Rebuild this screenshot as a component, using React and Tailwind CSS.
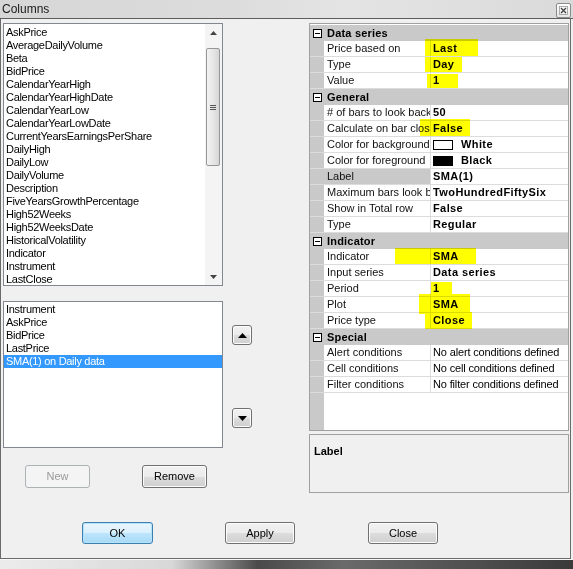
import React from "react";

const F = { fontFamily: '"Liberation Sans", Arial, sans-serif' };

const leftItems = [
  "AskPrice",
  "AverageDailyVolume",
  "Beta",
  "BidPrice",
  "CalendarYearHigh",
  "CalendarYearHighDate",
  "CalendarYearLow",
  "CalendarYearLowDate",
  "CurrentYearsEarningsPerShare",
  "DailyHigh",
  "DailyLow",
  "DailyVolume",
  "Description",
  "FiveYearsGrowthPercentage",
  "High52Weeks",
  "High52WeeksDate",
  "HistoricalVolatility",
  "Indicator",
  "Instrument",
  "LastClose",
];

const selItems = ["Instrument", "AskPrice", "BidPrice", "LastPrice", "SMA(1) on Daily data"];

const grid = [
  { h: "Data series" },
  { n: "Price based on", v: "Last", b: true },
  { n: "Type", v: "Day", b: true },
  { n: "Value", v: "1", b: true },
  { h: "General" },
  { n: "# of bars to look back", v: "50", b: true },
  { n: "Calculate on bar close", v: "False", b: true },
  { n: "Color for background", v: "White", b: true, sw: "#ffffff" },
  { n: "Color for foreground", v: "Black", b: true, sw: "#000000" },
  { n: "Label", v: "SMA(1)", b: true, sel: true },
  { n: "Maximum bars look back", v: "TwoHundredFiftySix", b: true },
  { n: "Show in Total row", v: "False", b: true },
  { n: "Type", v: "Regular", b: true },
  { h: "Indicator" },
  { n: "Indicator", v: "SMA", b: true },
  { n: "Input series", v: "Data series", b: true },
  { n: "Period", v: "1", b: true },
  { n: "Plot", v: "SMA", b: true },
  { n: "Price type", v: "Close", b: true },
  { h: "Special" },
  { n: "Alert conditions", v: "No alert conditions defined" },
  { n: "Cell conditions", v: "No cell conditions defined" },
  { n: "Filter conditions", v: "No filter conditions defined" },
];

function WinButton({ children, className = "", disabled, def }) {
  return (
    <div
      className={
        "flex items-center justify-center rounded-[3px] border text-[11px] " +
        (disabled
          ? "border-[#adb2b5] bg-[#f4f4f4] text-[#9a9a9a] "
          : def
          ? "border-[#3c7fb1] bg-[linear-gradient(#eaf6fd_0%,#d9f0fc_50%,#bee6fd_50%,#a7d9f5_100%)] text-black shadow-[inset_0_0_0_1px_#b6e2fa] "
          : "border-[#707070] bg-[linear-gradient(#f2f2f2_0%,#ebebeb_50%,#dddddd_50%,#cfcfcf_100%)] text-black shadow-[inset_0_0_0_1px_#fcfcfc] ") +
        className
      }
      style={F}
    >
      {children}
    </div>
  );
}

function Minus() {
  return (
    <svg width="9" height="9" viewBox="0 0 9 9" className="block">
      <rect x="0.5" y="0.5" width="8" height="8" fill="#ffffff" stroke="#000" strokeWidth="1" />
      <line x1="2" y1="4.5" x2="7" y2="4.5" stroke="#000" strokeWidth="1" />
    </svg>
  );
}

function Highlight({ cls }) {
  return <div className={"pointer-events-none absolute bg-[#ffff00] mix-blend-multiply " + cls} />;
}

export default function App() {
  return (
    <div className="relative h-[569px] w-[573px] overflow-hidden bg-[#f0f0f0] text-black" style={F}>
      {/* title bar */}
      <div className="flex h-[19px] items-center justify-between border-b border-[#5d5d5d] bg-[linear-gradient(90deg,#d6d6d6_0%,#dcdcdc_40%,#e4e4e4_60%,#dadada_100%)] pl-[2px] pr-[2px]">
        <span className="text-[12px] leading-none text-[#1a1a1a]">Columns</span>
        <div className="mt-[2px] flex h-[15px] w-[15px] items-center justify-center rounded-[2px] border border-[#8a8a8a] bg-[linear-gradient(#ffffff,#e6e6e6)]">
          <svg width="9" height="9" viewBox="0 0 9 9">
            <rect x="0.5" y="0.5" width="8" height="8" fill="none" stroke="#9a9a9a" strokeWidth="0.8" />
            <path d="M2 2 L7 7 M7 2 L2 7" stroke="#444" strokeWidth="1.3" />
          </svg>
        </div>
      </div>

      {/* body */}
      <div className="w-[571px] border-b border-l border-r border-[#6a6a6a] bg-[#f0f0f0]">
        <div className="flex h-[474px] pl-[2px] pt-[4px]">
          {/* left column */}
          <div className="flex w-[220px] flex-col">
            <div className="flex h-[263px] border border-[#828790] bg-white">
              <div className="flex-1 overflow-hidden pl-[2px] pt-[2px]">
                {leftItems.map((t) => (
                  <div key={t} className="h-[13px] whitespace-nowrap text-[11px] leading-[13px] tracking-[-0.3px]">
                    {t}
                  </div>
                ))}
              </div>
              <div className="flex w-[17px] flex-col bg-[#f4f4f4]">
                <div className="flex h-[17px] items-center justify-center">
                  <svg width="7" height="4" viewBox="0 0 7 4">
                    <path d="M3.5 0 L7 4 L0 4 Z" fill="#444" />
                  </svg>
                </div>
                <div className="ml-[1px] mt-[7px] flex h-[118px] w-[14px] items-center justify-center rounded-[2px] border border-[#979797] bg-[linear-gradient(90deg,#f3f3f3,#e6e6e6_50%,#d6d6d6)]">
                  <div className="flex flex-col gap-[1px]">
                    <div className="h-[1px] w-[6px] bg-[#555]" />
                    <div className="h-[1px] w-[6px] bg-[#555]" />
                    <div className="h-[1px] w-[6px] bg-[#555]" />
                  </div>
                </div>
                <div className="flex-1" />
                <div className="flex h-[17px] items-center justify-center">
                  <svg width="7" height="4" viewBox="0 0 7 4">
                    <path d="M0 0 L7 0 L3.5 4 Z" fill="#444" />
                  </svg>
                </div>
              </div>
            </div>

            <div className="mt-[15px] h-[147px] border border-[#828790] bg-white pt-[1px]">
              {selItems.map((t, i) => (
                <div
                  key={t}
                  className={
                    "h-[13px] whitespace-nowrap pl-[2px] text-[11px] leading-[13px] tracking-[-0.3px] " +
                    (i === 4 ? "bg-[#3399ff] text-white" : "")
                  }
                >
                  {t}
                </div>
              ))}
            </div>

            <div className="mt-[17px] flex">
              <WinButton disabled className="ml-[22px] h-[23px] w-[65px]">
                New
              </WinButton>
              <WinButton className="ml-[52px] h-[23px] w-[65px]">Remove</WinButton>
            </div>
          </div>

          {/* middle column */}
          <div className="flex w-[86px] flex-col pl-[9px]">
            <WinButton className="mt-[302px] h-[20px] w-[20px]">
              <svg width="9" height="5" viewBox="0 0 9 5">
                <path d="M4.5 0 L9 5 L0 5 Z" fill="#000" />
              </svg>
            </WinButton>
            <WinButton className="mt-[63px] h-[20px] w-[20px]">
              <svg width="9" height="5" viewBox="0 0 9 5">
                <path d="M0 0 L9 0 L4.5 5 Z" fill="#000" />
              </svg>
            </WinButton>
          </div>

          {/* right column */}
          <div className="flex w-[260px] flex-col">
            <div className="relative flex h-[408px] shrink-0 flex-col border border-[#a0a0a0] bg-white pt-[1px]">
              {grid.map((r, i) =>
                r.h ? (
                  <div key={i} className="flex h-[16px] shrink-0 items-center bg-[#c9c9c9]">
                    <div className="flex w-[14px] justify-center pl-[1px]">
                      <Minus />
                    </div>
                    <span className="pl-[3px] text-[11px] font-bold leading-none tracking-[0.2px]">{r.h}</span>
                  </div>
                ) : (
                  <div key={i} className="flex h-[16px] shrink-0 border-b border-[#dcdcdc]">
                    <div className="w-[14px] bg-[#c9c9c9]" />
                    <div
                      className={
                        "w-[107px] overflow-hidden whitespace-nowrap border-r border-[#dcdcdc] pl-[3px] text-[11px] leading-[15px] text-[#111] " +
                        (r.sel ? "bg-[#c9c9c9]" : "")
                      }
                    >
                      {r.n}
                    </div>
                    <div
                      className={
                        "flex flex-1 items-center overflow-hidden whitespace-nowrap pl-[2px] text-[11px] leading-[15px] " +
                        (r.b ? "font-bold tracking-[0.4px]" : "tracking-[-0.15px]")
                      }
                    >
                      {r.sw && (
                        <span
                          className="mr-[8px] inline-block h-[10px] w-[20px] border border-[#000]"
                          style={{ background: r.sw }}
                        />
                      )}
                      {r.v}
                    </div>
                  </div>
                )
              )}
              <div className="flex flex-1">
                <div className="w-[14px] bg-[#c9c9c9]" />
              </div>

              {/* yellow marker highlights */}
              <Highlight cls="left-[115px] top-[15px] h-[17px] w-[53px]" />
              <Highlight cls="left-[115px] top-[33px] h-[15px] w-[37px]" />
              <Highlight cls="left-[117px] top-[50px] h-[14px] w-[31px]" />
              <Highlight cls="left-[110px] top-[95px] h-[17px] w-[50px]" />
              <Highlight cls="left-[85px] top-[224px] h-[16px] w-[81px]" />
              <Highlight cls="left-[121px] top-[258px] h-[14px] w-[21px]" />
              <Highlight cls="left-[109px] top-[270px] h-[20px] w-[51px]" />
              <Highlight cls="left-[115px] top-[288px] h-[17px] w-[47px]" />
            </div>
            <div className="mt-[3px] h-[59px] shrink-0 border border-[#a0a0a0] bg-[#f0f0f0] pl-[4px] pt-[3px]">
              <span className="text-[11px] font-bold">Label</span>
            </div>
          </div>
        </div>

        {/* bottom buttons */}
        <div className="mt-[29px] flex pb-[14px]">
          <WinButton def className="ml-[81px] h-[22px] w-[71px]">
            OK
          </WinButton>
          <WinButton className="ml-[72px] h-[22px] w-[70px]">Apply</WinButton>
          <WinButton className="ml-[73px] h-[22px] w-[70px]">Close</WinButton>
        </div>
      </div>

      {/* outside strip */}
      <div className="h-[10px] border-t border-[#f8f8f8] bg-[linear-gradient(90deg,#ececec_0%,#d8d8d8_30%,#4a4a4a_45%,#6a6a6a_60%,#3a3a3a_100%)]" />
    </div>
  );
}
